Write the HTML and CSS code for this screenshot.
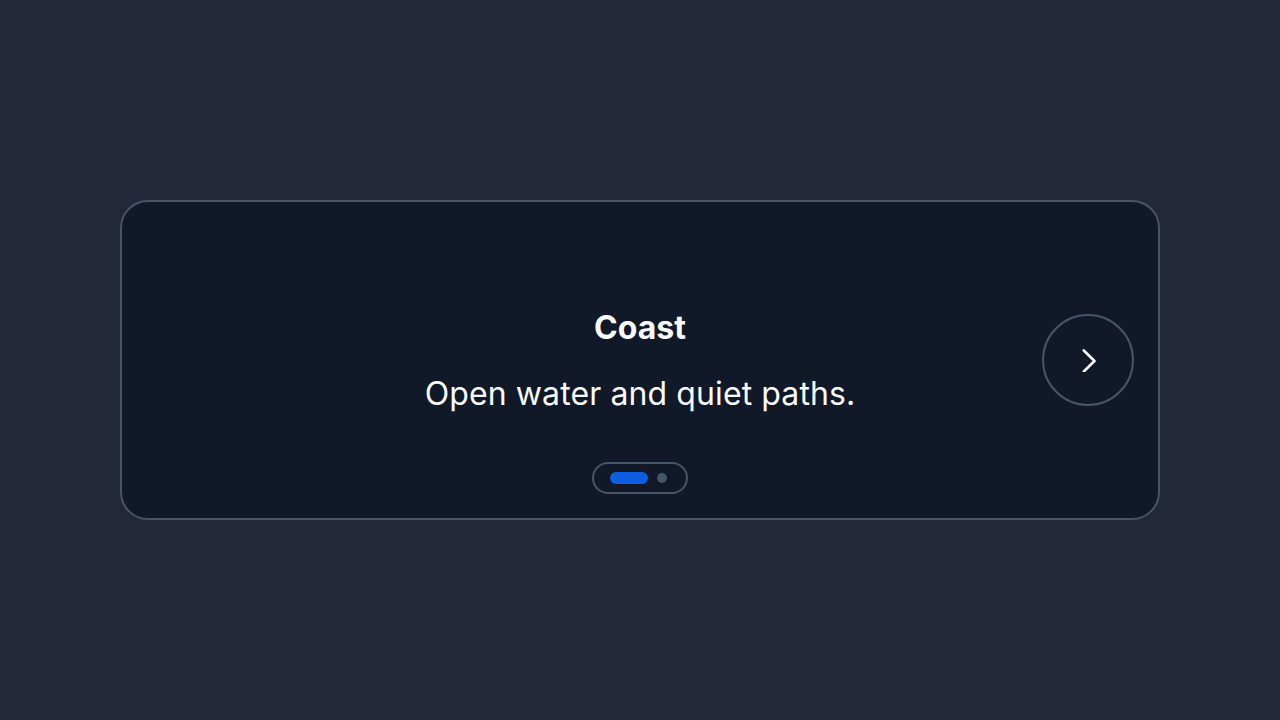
FILE: index.html
```html
<!DOCTYPE html>
<html lang="en">
<head>
<meta charset="utf-8">
<title>Coast</title>
<link rel="stylesheet" href="styles.css">
</head>
<body>
<main class="stage">
  <section class="card">
    <div class="slide">
      <h2 class="title">Coast</h2>
      <p class="text">Open water and quiet paths.</p>
    </div>
    <div class="dots">
      <span class="dot active"></span>
      <span class="dot"></span>
    </div>
    <button class="next" aria-label="Next">
      <svg width="24" height="24" viewBox="0 0 24 24" fill="none" stroke="#f8fafc" stroke-width="2.6" stroke-linecap="round" stroke-linejoin="round"><path d="M7.8 2.5L18.5 13L7.8 23.5"/></svg>
    </button>
  </section>
</main>
</body>
</html>
```
FILE: styles.css
```css
* { box-sizing: border-box; }
html, body { margin: 0; height: 100%; }
body {
  background: #222839;
  font-family: Inter, "Open Sans", sans-serif;
  color: #f8fafc;
}
.stage {
  height: 720px;
  display: flex;
  align-items: center;
  justify-content: center;
}
.card {
  position: relative;
  width: 1040px;
  height: 320px;
  background: #111827;
  border: 2px solid #475569;
  border-radius: 28px;
  display: flex;
  flex-direction: column;
  align-items: center;
  padding: 106px 24px 24px;
}
.slide {
  flex: 1;
  display: flex;
  flex-direction: column;
  align-items: center;
  gap: 24px;
}
.title {
  margin: 0;
  font-size: 32px;
  line-height: 40px;
  font-weight: 700;
}
.text {
  margin: 0;
  font-size: 32px;
  line-height: 44px;
  font-weight: 400;
  letter-spacing: 0.1px;
}
.dots {
  width: 96px;
  height: 32px;
  border: 2px solid #475569;
  border-radius: 16px;
  display: flex;
  align-items: center;
  justify-content: flex-start;
  gap: 9px;
  padding-left: 16px;
}
.dot {
  width: 10px;
  height: 10px;
  border-radius: 5px;
  background: #475569;
}
.dot.active {
  width: 38px;
  height: 12px;
  border-radius: 6px;
  background: #0b5fe0;
}
.next {
  position: absolute;
  right: 24px;
  top: 50%;
  transform: translateY(-50%);
  width: 92px;
  height: 92px;
  border-radius: 50%;
  border: 2px solid #475569;
  background: transparent;
  display: flex;
  align-items: center;
  justify-content: center;
  padding: 0;
  cursor: pointer;
}
```
